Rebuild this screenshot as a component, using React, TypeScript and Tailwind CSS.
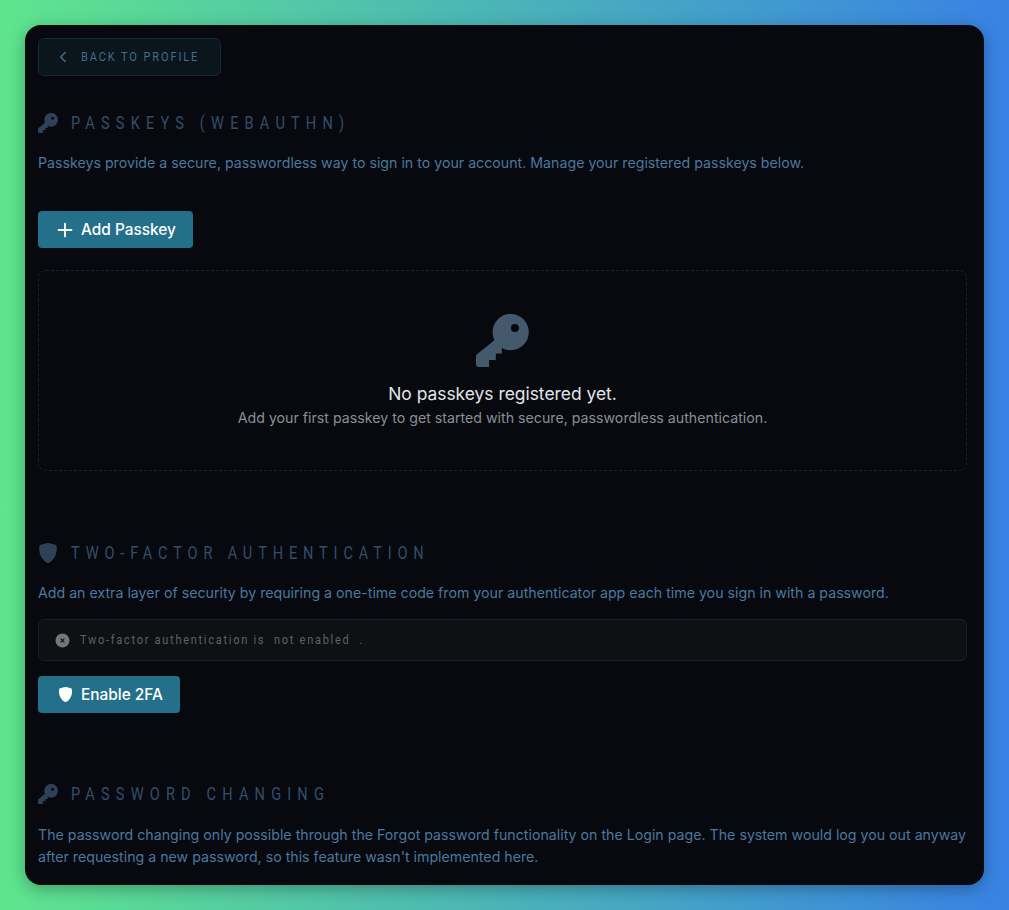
import { ChevronLeft, Plus } from "lucide-react";
import { HiXCircle } from "react-icons/hi2";
import { BsShieldFill } from "react-icons/bs";

const narrowFont = "font-['Roboto',sans-serif]";

function KeyIcon({ className }: { className: string }) {
  return (
    <svg viewBox="0 0 158 158" fill="currentColor" className={className}>
      <path
        fillRule="evenodd"
        d="M55 78A54 54 0 1 1 77 101L77 118L59 118L59 137L39 137L39 158L8 158Q0 158 0 150L0 125Q0 123 2 121ZM128 42a12 12 0 1 0-24 0a12 12 0 1 0 24 0Z"
      />
    </svg>
  );
}

function SectionHeading({
  icon,
  tracking = "tracking-[7.6px]",
  children,
}: {
  icon: React.ReactNode;
  tracking?: string;
  children: React.ReactNode;
}) {
  return (
    <h2 className="flex h-[24px] items-center gap-[13px]">
      {icon}
      <span className={`${narrowFont} ${tracking} origin-left scale-x-[0.81] text-[18px] leading-[24px] whitespace-nowrap text-[#314e6c] uppercase`}>
        {children}
      </span>
    </h2>
  );
}

function PrimaryButton({ icon, children }: { icon: React.ReactNode; children: React.ReactNode }) {
  return (
    <button
      type="button"
      className="flex h-[37px] items-center gap-[3px] rounded-[4px] bg-[#24708a] pr-[17px] pl-[16px] text-[15.4px] font-medium text-white"
    >
      <span className="flex w-[24px] justify-center">{icon}</span>
      {children}
    </button>
  );
}

export default function App() {
  return (
    <div className="min-h-[910px] bg-linear-to-r/srgb from-[#5ee58c] to-[#3882e4] p-[25px] font-['Inter',sans-serif]">
      <div className="h-[860px] rounded-[16px] bg-[#07090e] pt-[13px] pr-[17px] pl-[13px] shadow-[0_4px_16px_rgba(0,0,0,0.3)]">
        <button
          type="button"
          className="flex h-[38px] w-[183px] items-center gap-[9px] rounded-[6px] border border-[#11293a] bg-[#0a151c] pl-[15px] text-[#3f6f8e]"
        >
          <ChevronLeft className="size-[20px]" />
          <span className={`${narrowFont} origin-left scale-x-[0.85] text-[13px] tracking-[2.2px] whitespace-nowrap uppercase`}>
            Back to Profile
          </span>
        </button>

        <section className="mt-[35px]">
          <SectionHeading icon={<KeyIcon className="size-[20px] text-[#2d4257]" />}>Passkeys (WebAuthn)</SectionHeading>
          <p className="mt-[17px] text-[14.2px] leading-[22px] text-[#4a789f]">
            Passkeys provide a secure, passwordless way to sign in to your account. Manage your registered passkeys below.
          </p>
          <div className="mt-[37px] flex">
            <PrimaryButton icon={<Plus className="-ml-[2px] size-[22px]" strokeWidth={2} />}>Add Passkey</PrimaryButton>
          </div>
          <div className="mt-[22px] flex h-[201px] flex-col items-center rounded-[8px] border border-dashed border-[#10252f] pt-[43px]">
            <KeyIcon className="size-[53px] text-[#44596b]" />
            <p className="mt-[15px] text-[17.4px] leading-[24px] text-[#e2e5e8]">No passkeys registered yet.</p>
            <p className="mt-[1px] text-[14.2px] leading-[22px] text-[#8b8f94]">
              Add your first passkey to get started with secure, passwordless authentication.
            </p>
          </div>
        </section>

        <section className="mt-[70px]">
          <SectionHeading tracking="tracking-[7.2px]" icon={<BsShieldFill className="size-[20px] text-[#2d4257]" />}>
            Two-Factor Authentication
          </SectionHeading>
          <p className="mt-[17px] text-[14.2px] leading-[22px] text-[#4a789f]">
            Add an extra layer of security by requiring a one-time code from your authenticator app each time you sign in with a password.
          </p>
          <div className="mt-[15px] flex h-[42px] items-center gap-[9px] rounded-[6px] border border-[#1c1e23] bg-[#0e1014] pl-[15px]">
            <HiXCircle className="size-[17px] text-[#74767a]" />
            <span className={`${narrowFont} origin-left scale-x-[0.85] text-[13px] tracking-[2px] whitespace-pre text-[#5f6165]`}>
              Two-factor authentication is  not enabled  .
            </span>
          </div>
          <div className="mt-[15px] flex">
            <PrimaryButton icon={<BsShieldFill className="-ml-[2px] size-[15px]" />}>Enable 2FA</PrimaryButton>
          </div>
        </section>

        <section className="mt-[69px]">
          <SectionHeading icon={<KeyIcon className="size-[20px] text-[#2d4257]" />}>Password Changing</SectionHeading>
          <p className="mt-[18px] text-[14.2px] leading-[22px] text-[#4a789f]">
            The password changing only possible through the Forgot password functionality on the Login page. The system would log you out anyway after requesting a new password, so this feature wasn't implemented here.
          </p>
        </section>
      </div>
    </div>
  );
}
